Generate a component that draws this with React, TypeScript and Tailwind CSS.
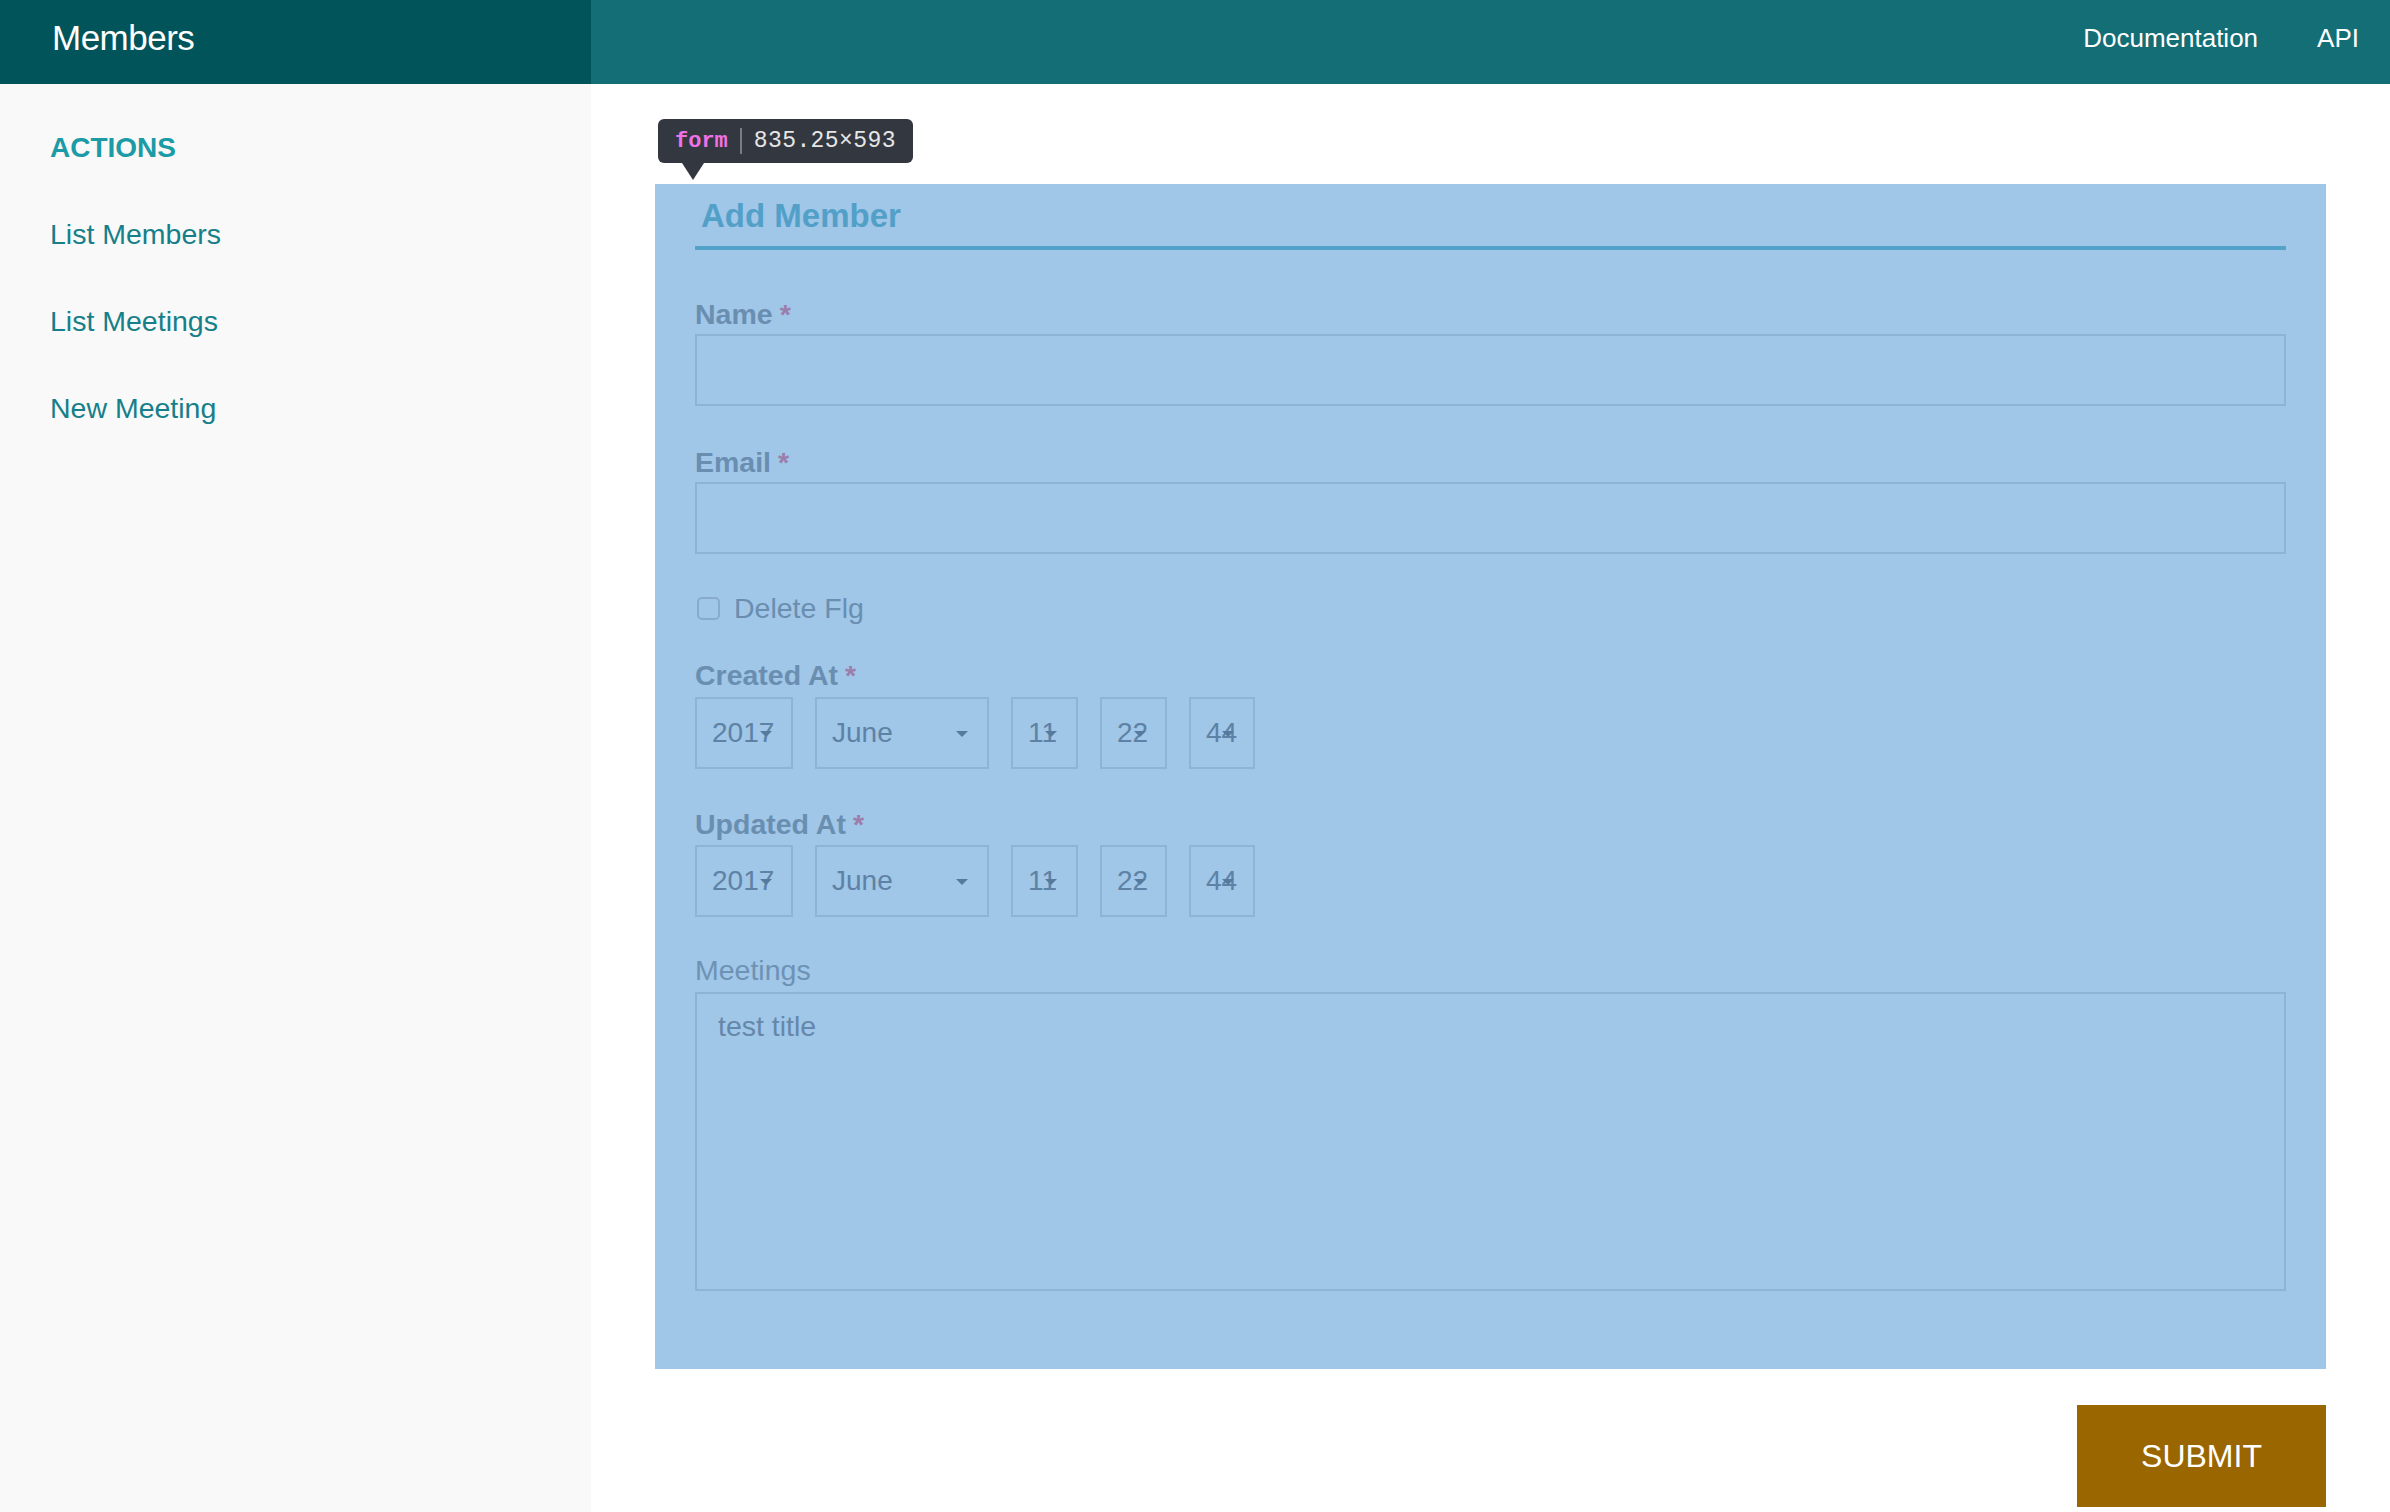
import React from "react";

const font = "font-['Liberation_Sans',Arial,sans-serif]";

function Caret() {
  return (
    <span className="absolute right-[19px] top-[32px] w-0 h-0 border-x-[6px] border-x-transparent border-t-[6px] border-t-[#557a9e]" />
  );
}

function SelectBox({ value, width }: { value: string; width: string }) {
  return (
    <div className={`relative h-[72px] ${width} border-2 border-[#8db4d7] flex items-center pl-[15px] text-[28px] text-[#5d82a5]`}>
      <span>{value}</span>
      <Caret />
    </div>
  );
}

function DateRow() {
  return (
    <div className="flex gap-[22px]">
      <SelectBox value="2017" width="w-[98px]" />
      <SelectBox value="June" width="w-[174px]" />
      <SelectBox value="11" width="w-[67px]" />
      <SelectBox value="22" width="w-[67px]" />
      <SelectBox value="44" width="w-[66px]" />
    </div>
  );
}

function Label({ text, required }: { text: string; required?: boolean }) {
  return (
    <div className="h-[32px] leading-[32px] text-[28.5px] font-bold text-[#6a8eb0]">
      {text}
      {required && <span className="ml-[7px] text-[#9c7eab]">*</span>}
    </div>
  );
}

export default function App() {
  const links = ["List Members", "List Meetings", "New Meeting"];

  return (
    <div className={`min-h-[1512px] w-full bg-white ${font}`}>
      {/* top bar */}
      <header className="flex h-[84px]">
        <div className="w-[591px] bg-[#02545b] flex items-center pb-[8px] pl-[52px]">
          <span className="text-[35px] text-white tracking-[-0.5px]">Members</span>
        </div>
        <div className="flex-1 bg-[#136e75] flex items-center justify-end gap-[59px] pb-[8px] pr-[31px] text-[26px] text-white">
          <a>Documentation</a>
          <a>API</a>
        </div>
      </header>

      <div className="flex min-h-[1428px]">
        {/* sidebar */}
        <aside className="w-[591px] bg-[#f9f9f9] pl-[50px] pt-[48px]">
          <h3 className="h-[32px] leading-[32px] text-[28px] font-bold text-[#1a9ba6]">ACTIONS</h3>
          <ul className="mt-[54px] flex flex-col gap-[55px]">
            {links.map((l) => (
              <li key={l} className="h-[32px] leading-[32px] text-[28.5px] text-[#167f89]">
                {l}
              </li>
            ))}
          </ul>
        </aside>

        {/* main */}
        <main className="flex-1 px-[64px] pt-[100px]">
          <div className="relative">
            {/* devtools tooltip */}
            <div className="absolute left-[3px] top-[-65px] h-[44px] w-[255px] rounded-[6px] bg-[#333740] flex items-center pl-[17px] font-['Liberation_Mono',monospace] text-[22px]">
              <span className="text-[#ee72e5] font-bold">form</span>
              <span className="mx-[12px] h-[26px] w-[2px] bg-[#7a7d84]" />
              <span className="text-[#e6e6e6] text-[23px] tracking-[0.4px]">835.25×593</span>
              <span className="absolute left-[24px] top-[44px] w-0 h-0 border-x-[11px] border-x-transparent border-t-[17px] border-t-[#333740]" />
            </div>

            <form className="h-[1185px] bg-[#a0c6e8] px-[40px] pt-[12px]">
              <div className="border-b-4 border-[#53a2ca] pb-[10px] pl-[6px]">
                <h2 className="h-[40px] leading-[40px] text-[33px] font-bold text-[#52a0c8]">Add Member</h2>
              </div>

              <div className="mt-[48px]">
                <Label text="Name" required />
                <div className="mt-[4px] h-[72px] border-2 border-[#8db4d7]" />
              </div>

              <div className="mt-[40px]">
                <Label text="Email" required />
                <div className="mt-[4px] h-[72px] border-2 border-[#8db4d7]" />
              </div>

              <div className="mt-[38px] h-[32px] flex items-center gap-[14px]">
                <span className="ml-[2px] w-[23px] h-[23px] rounded-[5px] border-2 border-[#88abcd]" />
                <span className="text-[28.5px] text-[#6a8eb0]">Delete Flg</span>
              </div>

              <div className="mt-[35px]">
                <Label text="Created At" required />
                <div className="mt-[6px]">
                  <DateRow />
                </div>
              </div>

              <div className="mt-[39px]">
                <Label text="Updated At" required />
                <div className="mt-[5px]">
                  <DateRow />
                </div>
              </div>

              <div className="mt-[37px]">
                <div className="h-[32px] leading-[32px] text-[28.5px] text-[#6e92b4]">Meetings</div>
                <div className="mt-[6px] h-[299px] border-2 border-[#8db4d7] pl-[21px] pt-[16px] text-[28.5px] leading-[32px] text-[#6587a9]">
                  test title
                </div>
              </div>
            </form>
          </div>

          <div className="mt-[36px] flex justify-end">
            <button className="w-[249px] h-[102px] bg-[#996600] text-white text-[32px]">SUBMIT</button>
          </div>
        </main>
      </div>
    </div>
  );
}
